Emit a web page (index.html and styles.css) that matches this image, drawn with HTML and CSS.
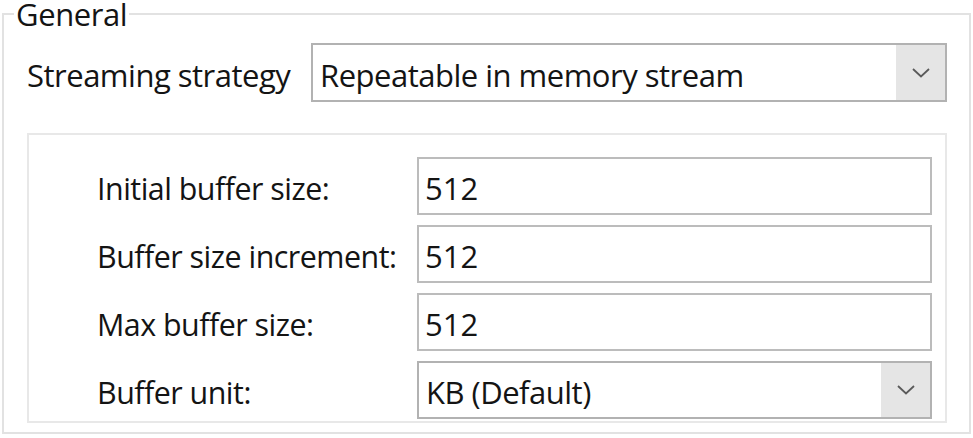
FILE: index.html
```html
<!DOCTYPE html>
<html>
<head>
<meta charset="utf-8">
<link rel="stylesheet" href="styles.css">
</head>
<body>
<fieldset class="group">
  <legend class="legend">General</legend>
  <div class="strategy-row">
    <span class="label strategy-label">Streaming strategy</span>
    <div class="combo combo-main">
      <span class="combo-text">Repeatable in memory stream</span>
      <span class="combo-btn"><svg width="18" height="10" viewBox="0 0 18 10"><polyline points="1,1 9,8.5 17,1" fill="none" stroke="#5a5a5a" stroke-width="1.8"/></svg></span>
    </div>
  </div>
  <div class="inner">
    <span class="label inner-label">Initial buffer size:</span>
    <div class="field">512</div>
    <span class="label inner-label">Buffer size increment:</span>
    <div class="field">512</div>
    <span class="label inner-label">Max buffer size:</span>
    <div class="field">512</div>
    <span class="label inner-label">Buffer unit:</span>
    <div class="combo">
      <span class="combo-text">KB (Default)</span>
      <span class="combo-btn"><svg width="18" height="10" viewBox="0 0 18 10"><polyline points="1,1 9,8.5 17,1" fill="none" stroke="#5a5a5a" stroke-width="1.8"/></svg></span>
    </div>
  </div>
</fieldset>
</body>
</html>
```
FILE: styles.css
```css
html, body {
  margin: 0;
  padding: 0;
  background: #ffffff;
}
body {
  font-family: "Open Sans", "Noto Sans", sans-serif;
  font-size: 31px;
  color: #141414;
}
.group {
  margin: 1px 2px 0 2px;
  border: 2px solid #e2e2e2;
  padding: 16px 22px 9px 23px;
}
.legend {
  padding: 0 2px;
  margin-left: -13px;
  line-height: 26px;
  letter-spacing: -0.4px;
}
.strategy-row {
  display: flex;
  align-items: center;
  height: 59px;
}
.strategy-label {
  width: 284px;
  flex: none;
}
.label {
  white-space: nowrap;
  letter-spacing: -0.5px;
  padding-top: 4px;
}
.inner-label {
  font-size: 30.4px;
}
.combo {
  flex: 1;
  display: flex;
  align-items: stretch;
  height: 58px;
  box-sizing: border-box;
  border: 2px solid #b2b2b2;
  background: #ffffff;
}
.combo-main {
  height: 59px;
}
.combo-text {
  flex: 1;
  display: flex;
  align-items: center;
  padding: 4px 0 0 7px;
  letter-spacing: -0.5px;
}
.combo-btn {
  width: 49px;
  background: #e5e5e5;
  display: flex;
  align-items: center;
  justify-content: center;
}
.inner {
  margin-top: 31px;
  border: 2px solid #e8e8e8;
  padding: 22px 13px 2px 68px;
  display: grid;
  grid-template-columns: 320px 1fr;
  grid-auto-rows: 58px;
  row-gap: 10px;
  align-items: center;
}
.field {
  height: 58px;
  box-sizing: border-box;
  border: 2px solid #bcbcbc;
  display: flex;
  align-items: center;
  padding: 4px 0 0 6px;
}
```
